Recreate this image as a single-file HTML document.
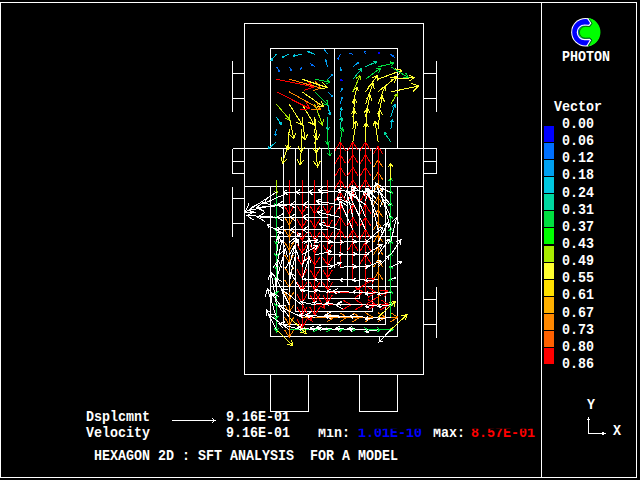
<!DOCTYPE html>
<html lang="en"><head><meta charset="utf-8"><title>PHOTON - HEXAGON 2D : SFT ANALYSIS FOR A MODEL</title>
<style>
html,body{margin:0;padding:0;background:#000;width:640px;height:480px;overflow:hidden}
svg{display:block;position:absolute;left:0;top:0}
text{font-family:"Liberation Mono",monospace;font-weight:bold;font-size:13.33px;white-space:pre}
#vec path{fill:none;stroke-width:1;stroke-linecap:butt;shape-rendering:crispEdges}
</style></head><body>
<svg width="640" height="480" viewBox="0 0 640 480">
<defs><clipPath id="cl"><rect x="300" y="428.7" width="240" height="14"/></clipPath></defs>
<rect width="640" height="480" fill="#000"/>
<path id="geom" d="M0.5 2.5H636.5V477.5H0.5Z M541.5 2.5L541.5 477.5 M244.5 23.5H423.5V374.5H244.5Z M270.5 48.5H397.5V148.5H270.5Z M334.5 48.5L334.5 267.5 M232.5 148.5L436.5 148.5 M244.5 186.5L423.5 186.5 M270.5 186.5H397.5V336.5H270.5Z M270.5 236.5L397.5 236.5 M270.5 286.5L397.5 286.5 M283.5 148.5V324.5H385.5V148.5 M295.5 148.5V311.5H372.5V148.5 M308.5 148.5V298.5H359.5V148.5 M321.5 148.5V286.5H347.5V148.5 M270.5 374.5V411.5H308.5V374.5 M359.5 374.5V411.5H397.5V374.5 M232.5 60.5L232.5 111.5 M232.5 73.5L244.5 73.5 M232.5 98.5L244.5 98.5 M436.5 60.5L436.5 111.5 M423.5 73.5L436.5 73.5 M423.5 98.5L436.5 98.5 M232.5 148.5L232.5 173.5 M232.5 161.5L244.5 161.5 M232.5 173.5L244.5 173.5 M436.5 148.5L436.5 173.5 M423.5 161.5L436.5 161.5 M423.5 173.5L436.5 173.5 M232.5 186.5L232.5 236.5 M232.5 198.5L244.5 198.5 M232.5 223.5L244.5 223.5 M436.5 286.5L436.5 337.5 M423.5 299.5L436.5 299.5 M423.5 324.5L436.5 324.5" fill="none" stroke="#fff" stroke-width="1" shape-rendering="crispEdges"/>
<g id="vec">
<path d="M276.4 329.8L293.0 345.6M287.0 344.3L293.0 345.6L291.4 339.6" stroke="#ffff30"/>
<path d="M289.2 329.8L304.2 329.8M300.8 331.9L304.2 329.8L300.8 327.6" stroke="#00e040"/>
<path d="M302.0 329.8L317.0 329.8M313.6 331.9L317.0 329.8L313.6 327.6" stroke="#00e040"/>
<path d="M314.8 329.8L329.8 329.8M326.4 331.9L329.8 329.8L326.4 327.6" stroke="#00e040"/>
<path d="M327.6 329.8L342.6 329.8M339.2 331.9L342.6 329.8L339.2 327.6" stroke="#00e040"/>
<path d="M340.3 329.8L355.3 329.8M351.9 331.9L355.3 329.8L351.9 327.6" stroke="#00e040"/>
<path d="M352.9 329.8L367.9 329.8M364.4 331.9L367.9 329.8L364.4 327.6" stroke="#00e040"/>
<path d="M365.5 329.8L380.5 329.8M377.1 331.9L380.5 329.8L377.1 327.6" stroke="#00e040"/>
<path d="M378.1 329.8L393.1 329.8M389.7 331.9L393.1 329.8L389.7 327.6" stroke="#00e040"/>
<path d="M390.7 329.8L407.0 314.7M405.4 320.4L407.0 314.7L401.1 315.9" stroke="#ffff30"/>
<path d="M276.4 317.2L276.4 331.8M274.4 328.4L276.4 331.8L278.4 328.4" stroke="#00e040"/>
<path d="M289.2 317.2L306.2 333.4M300.1 332.1L306.2 333.4L304.6 327.3" stroke="#ffff30"/>
<path d="M302.0 317.2L334.5 317.2M327.0 321.8L334.5 317.2L327.0 312.7" stroke="#ff8800"/>
<path d="M314.8 317.2L347.3 317.2M339.8 321.8L347.3 317.2L339.8 312.7" stroke="#ff8800"/>
<path d="M327.6 317.2L360.1 317.2M352.6 321.8L360.1 317.2L352.6 312.7" stroke="#ff8800"/>
<path d="M340.3 317.2L372.8 317.2M365.3 321.8L372.8 317.2L365.3 312.7" stroke="#ff8800"/>
<path d="M352.9 317.2L385.4 317.2M377.9 321.8L385.4 317.2L377.9 312.7" stroke="#ff8800"/>
<path d="M365.5 317.2L398.0 317.2M390.5 321.8L398.0 317.2L390.5 312.7" stroke="#ff8800"/>
<path d="M378.1 317.2L395.6 301.2M393.8 307.4L395.6 301.2L389.3 302.5" stroke="#ffff30"/>
<path d="M390.7 317.2L390.7 302.8M392.7 306.1L390.7 302.8L388.7 306.1" stroke="#00e040"/>
<path d="M276.4 304.8L276.4 319.2M274.4 315.9L276.4 319.2L278.4 315.9" stroke="#00e040"/>
<path d="M289.2 304.8L289.2 337.2M284.6 329.8L289.2 337.2L293.8 329.8" stroke="#ff8800"/>
<path d="M302.0 304.8L312.0 320.8M307.5 318.5L312.0 320.8L311.9 315.7" stroke="#ff0000"/>
<path d="M314.8 304.8L350.8 304.8M342.5 309.8L350.8 304.8L342.5 299.7" stroke="#ff0000"/>
<path d="M327.6 304.8L363.6 304.8M355.3 309.8L363.6 304.8L355.3 299.7" stroke="#ff0000"/>
<path d="M340.3 304.8L376.3 304.8M368.0 309.8L376.3 304.8L368.0 299.7" stroke="#ff0000"/>
<path d="M352.9 304.8L388.9 304.8M380.6 309.8L388.9 304.8L380.6 299.7" stroke="#ff0000"/>
<path d="M365.5 304.8L387.5 290.8M384.4 297.1L387.5 290.8L380.5 290.9" stroke="#ff0000"/>
<path d="M378.1 304.8L378.1 272.2M382.7 279.7L378.1 272.2L373.6 279.7" stroke="#ff8800"/>
<path d="M390.7 304.8L390.7 290.2M392.7 293.6L390.7 290.2L388.7 293.6" stroke="#00e040"/>
<path d="M276.4 292.2L276.4 306.8M274.4 303.4L276.4 306.8L278.4 303.4" stroke="#00e040"/>
<path d="M289.2 292.2L289.2 324.8M284.6 317.3L289.2 324.8L293.8 317.3" stroke="#ff8800"/>
<path d="M302.0 292.2L302.0 327.8M297.0 319.6L302.0 327.8L307.0 319.6" stroke="#ff0000"/>
<path d="M314.8 292.2L324.8 308.2M320.3 306.0L324.8 308.2L324.7 303.2" stroke="#ff0000"/>
<path d="M327.6 292.2L363.6 292.2M355.3 297.3L363.6 292.2L355.3 287.2" stroke="#ff0000"/>
<path d="M340.3 292.2L376.3 292.2M368.0 297.3L376.3 292.2L368.0 287.2" stroke="#ff0000"/>
<path d="M352.9 292.2L374.9 278.2M371.8 284.6L374.9 278.2L367.9 278.4" stroke="#ff0000"/>
<path d="M365.5 292.2L365.5 254.8M370.8 263.4L365.5 254.8L360.2 263.4" stroke="#ff0000"/>
<path d="M378.1 292.2L378.1 259.8M382.7 267.2L378.1 259.8L373.6 267.2" stroke="#ff8800"/>
<path d="M390.7 292.2L390.7 277.8M392.7 281.1L390.7 277.8L388.7 281.1" stroke="#00e040"/>
<path d="M276.4 279.8L276.4 294.2M274.4 290.9L276.4 294.2L278.4 290.9" stroke="#00e040"/>
<path d="M289.2 279.8L289.2 312.2M284.6 304.8L289.2 312.2L293.8 304.8" stroke="#ff8800"/>
<path d="M302.0 279.8L302.0 315.2M297.0 307.1L302.0 315.2L307.0 307.1" stroke="#ff0000"/>
<path d="M314.8 279.8L314.8 315.2M309.8 307.1L314.8 315.2L319.8 307.1" stroke="#ff0000"/>
<path d="M352.9 279.8L352.9 242.2M358.1 250.9L352.9 242.2L347.6 250.9" stroke="#ff0000"/>
<path d="M365.5 279.8L365.5 242.2M370.8 250.9L365.5 242.2L360.2 250.9" stroke="#ff0000"/>
<path d="M378.1 279.8L378.1 247.2M382.7 254.7L378.1 247.2L373.6 254.7" stroke="#ff8800"/>
<path d="M390.7 279.8L390.7 265.2M392.7 268.6L390.7 265.2L388.7 268.6" stroke="#00e040"/>
<path d="M276.4 267.2L276.4 281.8M274.4 278.4L276.4 281.8L278.4 278.4" stroke="#00e040"/>
<path d="M289.2 267.2L289.2 299.8M284.6 292.3L289.2 299.8L293.8 292.3" stroke="#ff8800"/>
<path d="M302.0 267.2L302.0 302.8M297.0 294.6L302.0 302.8L307.0 294.6" stroke="#ff0000"/>
<path d="M314.8 267.2L314.8 302.8M309.8 294.6L314.8 302.8L319.8 294.6" stroke="#ff0000"/>
<path d="M327.6 267.2L327.6 302.8M322.6 294.6L327.6 302.8L332.6 294.6" stroke="#ff0000"/>
<path d="M340.3 267.2L340.3 229.8M345.6 238.4L340.3 229.8L335.1 238.4" stroke="#ff0000"/>
<path d="M352.9 267.2L352.9 229.8M358.1 238.4L352.9 229.8L347.6 238.4" stroke="#ff0000"/>
<path d="M365.5 267.2L365.5 229.8M370.8 238.4L365.5 229.8L360.2 238.4" stroke="#ff0000"/>
<path d="M378.1 267.2L378.1 234.8M382.7 242.2L378.1 234.8L373.6 242.2" stroke="#ff8800"/>
<path d="M390.7 267.2L390.7 252.8M392.7 256.1L390.7 252.8L388.7 256.1" stroke="#00e040"/>
<path d="M276.4 254.8L276.4 269.2M274.4 265.9L276.4 269.2L278.4 265.9" stroke="#00e040"/>
<path d="M289.2 254.8L289.2 287.2M284.6 279.8L289.2 287.2L293.8 279.8" stroke="#ff8800"/>
<path d="M302.0 254.8L302.0 290.2M297.0 282.1L302.0 290.2L307.0 282.1" stroke="#ff0000"/>
<path d="M314.8 254.8L314.8 290.2M309.8 282.1L314.8 290.2L319.8 282.1" stroke="#ff0000"/>
<path d="M327.6 254.8L327.6 290.2M322.6 282.1L327.6 290.2L332.6 282.1" stroke="#ff0000"/>
<path d="M340.3 254.8L340.3 217.2M345.6 225.9L340.3 217.2L335.1 225.9" stroke="#ff0000"/>
<path d="M352.9 254.8L352.9 217.2M358.1 225.9L352.9 217.2L347.6 225.9" stroke="#ff0000"/>
<path d="M365.5 254.8L365.5 217.2M370.8 225.9L365.5 217.2L360.2 225.9" stroke="#ff0000"/>
<path d="M378.1 254.8L378.1 222.2M382.7 229.7L378.1 222.2L373.6 229.7" stroke="#ff8800"/>
<path d="M390.7 254.8L390.7 240.2M392.7 243.6L390.7 240.2L388.7 243.6" stroke="#00e040"/>
<path d="M276.4 242.2L276.4 256.8M274.4 253.4L276.4 256.8L278.4 253.4" stroke="#00e040"/>
<path d="M289.2 242.2L289.2 274.8M284.6 267.3L289.2 274.8L293.8 267.3" stroke="#ff8800"/>
<path d="M302.0 242.2L302.0 277.8M297.0 269.6L302.0 277.8L307.0 269.6" stroke="#ff0000"/>
<path d="M314.8 242.2L314.8 277.8M309.8 269.6L314.8 277.8L319.8 269.6" stroke="#ff0000"/>
<path d="M327.6 242.2L327.6 277.8M322.6 269.6L327.6 277.8L332.6 269.6" stroke="#ff0000"/>
<path d="M340.3 242.2L340.3 204.8M345.6 213.4L340.3 204.8L335.1 213.4" stroke="#ff0000"/>
<path d="M352.9 242.2L352.9 204.8M358.1 213.4L352.9 204.8L347.6 213.4" stroke="#ff0000"/>
<path d="M365.5 242.2L365.5 204.8M370.8 213.4L365.5 204.8L360.2 213.4" stroke="#ff0000"/>
<path d="M378.1 242.2L378.1 209.8M382.7 217.2L378.1 209.8L373.6 217.2" stroke="#ff8800"/>
<path d="M390.7 242.2L390.7 227.8M392.7 231.1L390.7 227.8L388.7 231.1" stroke="#00e040"/>
<path d="M276.4 229.8L276.4 244.2M274.4 240.9L276.4 244.2L278.4 240.9" stroke="#00e040"/>
<path d="M289.2 229.8L289.2 262.2M284.6 254.8L289.2 262.2L293.8 254.8" stroke="#ff8800"/>
<path d="M302.0 229.8L302.0 265.2M297.0 257.1L302.0 265.2L307.0 257.1" stroke="#ff0000"/>
<path d="M314.8 229.8L314.8 265.2M309.8 257.1L314.8 265.2L319.8 257.1" stroke="#ff0000"/>
<path d="M327.6 229.8L327.6 265.2M322.6 257.1L327.6 265.2L332.6 257.1" stroke="#ff0000"/>
<path d="M340.3 229.8L340.3 192.2M345.6 200.9L340.3 192.2L335.1 200.9" stroke="#ff0000"/>
<path d="M352.9 229.8L352.9 192.2M358.1 200.9L352.9 192.2L347.6 200.9" stroke="#ff0000"/>
<path d="M365.5 229.8L365.5 192.2M370.8 200.9L365.5 192.2L360.2 200.9" stroke="#ff0000"/>
<path d="M378.1 229.8L378.1 197.2M382.7 204.7L378.1 197.2L373.6 204.7" stroke="#ff8800"/>
<path d="M390.7 229.8L390.7 215.2M392.7 218.6L390.7 215.2L388.7 218.6" stroke="#00e040"/>
<path d="M276.4 217.2L276.4 231.8M274.4 228.4L276.4 231.8L278.4 228.4" stroke="#00e040"/>
<path d="M289.2 217.2L289.2 249.8M284.6 242.3L289.2 249.8L293.8 242.3" stroke="#ff8800"/>
<path d="M302.0 217.2L302.0 252.8M297.0 244.6L302.0 252.8L307.0 244.6" stroke="#ff0000"/>
<path d="M314.8 217.2L314.8 252.8M309.8 244.6L314.8 252.8L319.8 244.6" stroke="#ff0000"/>
<path d="M327.6 217.2L327.6 252.8M322.6 244.6L327.6 252.8L332.6 244.6" stroke="#ff0000"/>
<path d="M340.3 217.2L340.3 179.8M345.6 188.4L340.3 179.8L335.1 188.4" stroke="#ff0000"/>
<path d="M352.9 217.2L352.9 179.8M358.1 188.4L352.9 179.8L347.6 188.4" stroke="#ff0000"/>
<path d="M365.5 217.2L365.5 179.8M370.8 188.4L365.5 179.8L360.2 188.4" stroke="#ff0000"/>
<path d="M378.1 217.2L378.1 184.8M382.7 192.2L378.1 184.8L373.6 192.2" stroke="#ff8800"/>
<path d="M390.7 217.2L390.7 202.8M392.7 206.1L390.7 202.8L388.7 206.1" stroke="#00e040"/>
<path d="M276.4 204.8L276.4 219.2M274.4 215.9L276.4 219.2L278.4 215.9" stroke="#00e040"/>
<path d="M289.2 204.8L289.2 237.2M284.6 229.8L289.2 237.2L293.8 229.8" stroke="#ff8800"/>
<path d="M302.0 204.8L302.0 240.2M297.0 232.1L302.0 240.2L307.0 232.1" stroke="#ff0000"/>
<path d="M314.8 204.8L314.8 240.2M309.8 232.1L314.8 240.2L319.8 232.1" stroke="#ff0000"/>
<path d="M327.6 204.8L327.6 240.2M322.6 232.1L327.6 240.2L332.6 232.1" stroke="#ff0000"/>
<path d="M340.3 204.8L340.3 167.2M345.6 175.9L340.3 167.2L335.1 175.9" stroke="#ff0000"/>
<path d="M352.9 204.8L352.9 167.2M358.1 175.9L352.9 167.2L347.6 175.9" stroke="#ff0000"/>
<path d="M365.5 204.8L365.5 167.2M370.8 175.9L365.5 167.2L360.2 175.9" stroke="#ff0000"/>
<path d="M378.1 204.8L378.1 172.2M382.7 179.7L378.1 172.2L373.6 179.7" stroke="#ff8800"/>
<path d="M390.7 204.8L390.7 190.2M392.7 193.6L390.7 190.2L388.7 193.6" stroke="#00e040"/>
<path d="M276.4 192.2L276.4 206.8M274.4 203.4L276.4 206.8L278.4 203.4" stroke="#00e040"/>
<path d="M289.2 192.2L289.2 224.8M284.6 217.3L289.2 224.8L293.8 217.3" stroke="#ff8800"/>
<path d="M302.0 192.2L302.0 227.8M297.0 219.6L302.0 227.8L307.0 219.6" stroke="#ff0000"/>
<path d="M314.8 192.2L314.8 227.8M309.8 219.6L314.8 227.8L319.8 219.6" stroke="#ff0000"/>
<path d="M327.6 192.2L327.6 227.8M322.6 219.6L327.6 227.8L332.6 219.6" stroke="#ff0000"/>
<path d="M340.3 192.2L340.3 154.8M345.6 163.4L340.3 154.8L335.1 163.4" stroke="#ff0000"/>
<path d="M352.9 192.2L352.9 154.8M358.1 163.4L352.9 154.8L347.6 163.4" stroke="#ff0000"/>
<path d="M365.5 192.2L365.5 154.8M370.8 163.4L365.5 154.8L360.2 163.4" stroke="#ff0000"/>
<path d="M378.1 192.2L378.1 159.8M382.7 167.2L378.1 159.8L373.6 167.2" stroke="#ff8800"/>
<path d="M390.7 192.2L390.7 177.8M392.7 181.1L390.7 177.8L388.7 181.1" stroke="#00e040"/>
<path d="M276.4 179.7L276.4 194.0M274.4 190.7L276.4 194.0L278.4 190.7" stroke="#a8ec00"/>
<path d="M289.2 179.7L289.2 213.7M284.4 205.9L289.2 213.7L294.0 205.9" stroke="#ff0000"/>
<path d="M302.0 179.7L302.0 213.7M297.2 205.9L302.0 213.7L306.8 205.9" stroke="#ff0000"/>
<path d="M314.8 179.7L314.8 213.7M310.0 205.9L314.8 213.7L319.6 205.9" stroke="#ff0000"/>
<path d="M327.6 179.7L327.6 213.7M322.8 205.9L327.6 213.7L332.4 205.9" stroke="#ff0000"/>
<path d="M340.3 179.7L340.3 141.9M345.6 150.6L340.3 141.9L335.0 150.6" stroke="#ff0000"/>
<path d="M352.9 179.7L352.9 141.9M358.2 150.6L352.9 141.9L347.6 150.6" stroke="#ff0000"/>
<path d="M365.5 179.7L365.5 141.9M370.8 150.6L365.5 141.9L360.2 150.6" stroke="#ff0000"/>
<path d="M378.1 179.7L378.1 146.3M382.8 154.0L378.1 146.3L373.4 154.0" stroke="#ff0000"/>
<path d="M390.7 179.7L390.7 163.5M393.0 167.2L390.7 163.5L388.4 167.2" stroke="#ffff30"/>
<path d="M276.4 141.8L268.1 148.8M269.0 146.0L268.1 148.8L271.0 148.3" stroke="#00c8e0"/>
<path d="M289.2 141.8L282.5 163.1M281.1 157.3L282.5 163.1L287.0 159.1" stroke="#ffff30"/>
<path d="M302.0 141.8L300.0 165.0M297.2 159.4L300.0 165.0L303.7 159.9" stroke="#ffff30"/>
<path d="M314.8 141.8L317.5 166.9M313.4 161.5L317.5 166.9L320.4 160.7" stroke="#ffff30"/>
<path d="M327.6 141.8L330.0 156.2M327.4 153.3L330.0 156.2L331.5 152.6" stroke="#00e040"/>
<path d="M340.3 141.8L342.5 128.0M343.9 131.5L342.5 128.0L340.1 130.9" stroke="#00e040"/>
<path d="M352.9 141.8L356.2 121.2M358.3 126.4L356.2 121.2L352.6 125.5" stroke="#ffff30"/>
<path d="M365.5 141.8L366.2 122.5M368.8 127.0L366.2 122.5L363.4 126.8" stroke="#ffff30"/>
<path d="M378.1 141.8L375.0 121.2M378.6 125.5L375.0 121.2L372.8 126.4" stroke="#ffff30"/>
<path d="M390.7 141.8L384.4 132.5M387.1 133.7L384.4 132.5L384.6 135.5" stroke="#00d8a0"/>
<path d="M276.4 129.2L275.2 135.6M274.6 134.0L275.2 135.6L276.4 134.3" stroke="#00a0f0"/>
<path d="M289.2 129.2L288.1 150.0M285.4 145.1L288.1 150.0L291.3 145.4" stroke="#ffff30"/>
<path d="M302.0 129.2L301.2 151.9M298.3 146.6L301.2 151.9L304.6 146.8" stroke="#ffff30"/>
<path d="M314.8 129.2L316.2 153.0M312.6 147.7L316.2 153.0L319.2 147.3" stroke="#ffff30"/>
<path d="M327.6 129.2L327.5 144.4M325.4 140.9L327.5 144.4L329.6 140.9" stroke="#00e040"/>
<path d="M340.3 129.2L341.5 117.5M342.9 120.4L341.5 117.5L339.6 120.0" stroke="#00d8a0"/>
<path d="M352.9 129.2L354.4 109.4M356.8 114.2L354.4 109.4L351.3 113.8" stroke="#ffff30"/>
<path d="M365.5 129.2L367.5 108.0M370.0 113.2L367.5 108.0L364.1 112.6" stroke="#ffff30"/>
<path d="M378.1 129.2L380.0 110.0M382.3 114.7L380.0 110.0L376.9 114.2" stroke="#ffff30"/>
<path d="M390.7 129.2L392.5 120.0M393.4 122.4L392.5 120.0L390.8 121.9" stroke="#00c8e0"/>
<path d="M276.4 116.8L281.2 124.4M279.1 123.3L281.2 124.4L281.2 122.0" stroke="#00c8e0"/>
<path d="M289.2 116.8L293.8 138.8M289.6 134.3L293.8 138.8L295.8 133.1" stroke="#ffff30"/>
<path d="M302.0 116.8L305.0 140.0M301.1 135.1L305.0 140.0L307.6 134.2" stroke="#ffff30"/>
<path d="M314.8 116.8L316.9 140.0M313.2 134.9L316.9 140.0L319.7 134.4" stroke="#ffff30"/>
<path d="M327.6 116.8L328.1 130.0M326.1 127.0L328.1 130.0L329.8 126.9" stroke="#00d8a0"/>
<path d="M340.3 116.8L341.5 107.8M342.5 110.0L341.5 107.8L340.0 109.7" stroke="#00c8e0"/>
<path d="M352.9 116.8L355.0 98.8M357.0 103.2L355.0 98.8L352.0 102.6" stroke="#ffff30"/>
<path d="M365.5 116.8L370.0 95.0M372.0 100.6L370.0 95.0L365.9 99.4" stroke="#ffff30"/>
<path d="M378.1 116.8L382.5 96.2M384.4 101.6L382.5 96.2L378.6 100.3" stroke="#ffff30"/>
<path d="M390.7 116.8L395.0 104.4M395.7 107.8L395.0 104.4L392.3 106.6" stroke="#00c8e0"/>
<path d="M276.4 104.2L290.0 120.0M284.7 118.3L290.0 120.0L289.1 114.5" stroke="#a8ec00"/>
<path d="M289.2 104.2L302.5 125.0M296.5 122.1L302.5 125.0L302.3 118.4" stroke="#ffff30"/>
<path d="M302.0 104.2L314.4 125.0M308.6 122.0L314.4 125.0L314.5 118.5" stroke="#ffff30"/>
<path d="M314.8 104.2L322.5 125.0M317.8 121.3L322.5 125.0L323.6 119.1" stroke="#a8ec00"/>
<path d="M327.6 104.2L330.0 115.0M327.9 112.9L330.0 115.0L331.0 112.2" stroke="#00c8e0"/>
<path d="M340.3 104.2L342.0 96.9M342.6 98.8L342.0 96.9L340.6 98.4" stroke="#00a0f0"/>
<path d="M352.9 104.2L356.9 86.9M358.4 91.5L356.9 86.9L353.6 90.3" stroke="#ffff30"/>
<path d="M365.5 104.2L373.1 83.1M374.3 89.0L373.1 83.1L368.4 86.9" stroke="#ffff30"/>
<path d="M378.1 104.2L385.0 86.2M385.9 91.4L385.0 86.2L380.9 89.4" stroke="#ffff30"/>
<path d="M390.7 104.2L397.0 94.0M397.0 97.2L397.0 94.0L394.1 95.5" stroke="#a8ec00"/>
<path d="M276.4 91.8L310.0 108.8M299.9 109.5L310.0 108.8L304.7 100.1" stroke="#ff0000"/>
<path d="M289.2 91.8L320.6 109.4M310.9 109.7L320.6 109.4L315.8 100.9" stroke="#ff8800"/>
<path d="M302.0 91.8L323.8 106.9M316.6 106.5L323.8 106.9L320.9 100.4" stroke="#ffff30"/>
<path d="M314.8 91.8L328.1 105.0M323.2 103.8L328.1 105.0L326.9 100.1" stroke="#00e040"/>
<path d="M327.6 91.8L332.5 96.5M330.7 96.1L332.5 96.5L332.0 94.7" stroke="#00a0f0"/>
<path d="M340.3 91.8L342.5 88.5M342.4 90.0L342.5 88.5L341.1 89.1" stroke="#00a0f0"/>
<path d="M352.9 91.8L360.0 75.6M360.6 80.3L360.0 75.6L356.1 78.3" stroke="#a8ec00"/>
<path d="M365.5 91.8L377.5 75.6M377.0 81.0L377.5 75.6L372.5 77.6" stroke="#ffff30"/>
<path d="M378.1 91.8L396.7 76.7M394.5 82.8L396.7 76.7L390.3 77.6" stroke="#ffff30"/>
<path d="M390.7 91.8L418.8 86.1M413.1 91.3L418.8 86.1L411.5 83.5" stroke="#ffff30"/>
<path d="M276.4 79.2L313.8 86.9M304.1 90.4L313.8 86.9L306.2 79.9" stroke="#ff0000"/>
<path d="M289.2 79.2L321.2 88.1M312.6 90.6L321.2 88.1L315.1 81.6" stroke="#ff8800"/>
<path d="M302.0 79.2L326.9 87.5M320.0 89.1L326.9 87.5L322.3 82.1" stroke="#ffff30"/>
<path d="M314.8 79.2L330.0 82.1M326.1 83.6L330.0 82.1L326.9 79.3" stroke="#00e040"/>
<path d="M327.6 79.2L332.5 74.4M332.1 76.2L332.5 74.4L330.7 74.8" stroke="#00a0f0"/>
<path d="M340.3 79.2L342.0 80.5M340.5 80.4L342.0 80.5L341.4 79.1" stroke="#0000ff"/>
<path d="M352.9 79.2L361.9 68.5M361.3 72.2L361.9 68.5L358.3 69.7" stroke="#00d8a0"/>
<path d="M365.5 79.2L380.6 68.1M378.7 72.8L380.6 68.1L375.6 68.6" stroke="#00e040"/>
<path d="M378.1 79.2L401.9 70.2M397.7 75.6L401.9 70.2L395.2 68.9" stroke="#ffff30"/>
<path d="M390.7 79.2L414.0 77.7M408.9 81.3L414.0 77.7L408.4 74.8" stroke="#ffff30"/>
<path d="M276.4 66.8L279.8 71.5M278.3 70.9L279.8 71.5L279.6 69.9" stroke="#0070ff"/>
<path d="M289.2 66.8L291.5 70.6M290.2 69.9L291.5 70.6L291.5 69.1" stroke="#0070ff"/>
<path d="M302.0 66.8L300.6 69.0M300.6 67.5L300.6 69.0L301.9 68.3" stroke="#0070ff"/>
<path d="M314.8 66.8L311.2 64.0M312.8 64.2L311.2 64.0L311.8 65.4" stroke="#0070ff"/>
<path d="M327.6 66.8L325.6 60.0M327.0 61.3L325.6 60.0L325.1 61.8" stroke="#00a0f0"/>
<path d="M340.3 66.8L341.0 70.6M340.0 69.5L341.0 70.6L341.5 69.2" stroke="#00a0f0"/>
<path d="M352.9 66.8L358.8 62.2M358.0 64.1L358.8 62.2L356.8 62.5" stroke="#00a0f0"/>
<path d="M365.5 66.8L376.9 61.5M375.0 64.3L376.9 61.5L373.5 61.1" stroke="#00d8a0"/>
<path d="M378.1 66.8L393.8 63.1M390.7 66.1L393.8 63.1L389.6 61.7" stroke="#00e040"/>
<path d="M390.7 66.8L408.1 77.5M402.6 77.5L408.1 77.5L405.6 72.6" stroke="#00e040"/>
<path d="M276.4 54.2L271.0 60.6M271.4 58.4L271.0 60.6L273.1 59.9" stroke="#00c8e0"/>
<path d="M289.2 54.2L282.2 57.1M283.4 55.5L282.2 57.1L284.2 57.4" stroke="#00c8e0"/>
<path d="M302.0 54.2L293.1 56.0M294.9 54.4L293.1 56.0L295.4 56.8" stroke="#00c8e0"/>
<path d="M314.8 54.2L307.5 51.5M309.6 51.1L307.5 51.5L308.8 53.2" stroke="#00c8e0"/>
<path d="M327.6 54.2L324.8 49.8M326.1 50.4L324.8 49.8L324.8 51.3" stroke="#00a0f0"/>
<path d="M340.3 54.2L338.1 59.4M337.9 57.9L338.1 59.4L339.3 58.5" stroke="#0070ff"/>
<path d="M352.9 54.2L349.4 53.5M350.8 53.0L349.4 53.5L350.5 54.5" stroke="#0070ff"/>
<path d="M365.5 54.2L364.4 51.2M365.6 52.2L364.4 51.2L364.1 52.7" stroke="#0070ff"/>
<path d="M378.1 54.2L379.4 52.2M379.3 53.8L379.4 52.2L378.0 52.9" stroke="#0000ff"/>
<path d="M390.7 54.2L393.8 56.9M392.3 56.6L393.8 56.9L393.3 55.5" stroke="#0070ff"/>
<path d="M276.4 329.8L266.6 310.1M271.6 313.2L266.6 310.1L266.1 316.0" stroke="#ffffff"/>
<path d="M289.2 329.8L268.4 314.1M275.4 314.8L268.4 314.1L271.0 320.6" stroke="#ffffff"/>
<path d="M302.0 329.8L278.8 323.8M284.9 321.9L278.8 323.8L283.3 328.4" stroke="#ffffff"/>
<path d="M314.8 329.8L297.4 327.5M301.8 325.6L297.4 327.5L301.1 330.4" stroke="#ffffff"/>
<path d="M327.6 329.8L310.2 327.8M314.5 325.8L310.2 327.8L313.9 330.6" stroke="#ffffff"/>
<path d="M340.3 329.8L316.4 327.4M322.2 324.6L316.4 327.4L321.6 331.3" stroke="#ffffff"/>
<path d="M352.9 329.8L335.5 328.3M339.7 326.2L335.5 328.3L339.3 331.0" stroke="#ffffff"/>
<path d="M365.5 329.8L348.0 328.5M352.2 326.4L348.0 328.5L351.9 331.3" stroke="#ffffff"/>
<path d="M378.1 329.8L365.2 331.6M367.9 329.3L365.2 331.6L368.4 332.9" stroke="#ffffff"/>
<path d="M390.7 329.8L379.0 342.0M380.0 337.5L379.0 342.0L383.4 340.8" stroke="#ffffff"/>
<path d="M276.4 317.2L267.4 288.6M273.4 294.0L267.4 288.6L265.4 296.5" stroke="#ffffff"/>
<path d="M289.2 317.2L271.2 293.2M278.7 296.2L271.2 293.2L272.0 301.3" stroke="#ffffff"/>
<path d="M302.0 317.2L278.5 306.0M285.5 305.3L278.5 306.0L282.4 311.9" stroke="#ffffff"/>
<path d="M314.8 317.2L298.9 315.2M302.9 313.4L298.9 315.2L302.3 317.9" stroke="#ffffff"/>
<path d="M327.6 317.2L305.7 314.7M311.1 312.3L305.7 314.7L310.4 318.4" stroke="#ffffff"/>
<path d="M340.3 317.2L324.4 315.7M328.3 313.8L324.4 315.7L327.8 318.3" stroke="#ffffff"/>
<path d="M352.9 317.2L325.0 314.9M331.7 311.5L325.0 314.9L331.1 319.3" stroke="#ffffff"/>
<path d="M365.5 317.2L349.5 316.1M353.4 314.2L349.5 316.1L353.1 318.6" stroke="#ffffff"/>
<path d="M378.1 317.2L365.2 319.1M367.9 316.8L365.2 319.1L368.4 320.4" stroke="#ffffff"/>
<path d="M390.7 317.2L377.8 319.1M380.5 316.8L377.8 319.1L381.0 320.4" stroke="#ffffff"/>
<path d="M276.4 304.8L271.1 272.2M276.9 278.9L271.1 272.2L267.8 280.4" stroke="#ffffff"/>
<path d="M289.2 304.8L275.8 277.9M282.6 282.2L275.8 277.9L275.1 286.0" stroke="#ffffff"/>
<path d="M302.0 304.8L281.2 289.1M288.2 289.8L281.2 289.1L283.8 295.6" stroke="#ffffff"/>
<path d="M314.8 304.8L300.6 301.9M304.2 300.6L300.6 301.9L303.5 304.6" stroke="#ffffff"/>
<path d="M327.6 304.8L313.3 302.6M316.9 301.1L313.3 302.6L316.3 305.1" stroke="#ffffff"/>
<path d="M340.3 304.8L325.9 303.3M329.4 301.6L325.9 303.3L329.0 305.7" stroke="#ffffff"/>
<path d="M352.9 304.8L338.4 304.0M341.9 302.2L338.4 304.0L341.6 306.2" stroke="#ffffff"/>
<path d="M365.5 304.8L335.5 304.8M342.4 300.6L335.5 304.8L342.4 308.9" stroke="#ffffff"/>
<path d="M378.1 304.8L365.2 306.6M367.9 304.3L365.2 306.6L368.4 307.9" stroke="#ffffff"/>
<path d="M390.7 304.8L377.8 306.6M380.5 304.3L377.8 306.6L381.0 307.9" stroke="#ffffff"/>
<path d="M276.4 292.2L278.0 260.3M282.1 267.9L278.0 260.3L273.2 267.4" stroke="#ffffff"/>
<path d="M289.2 292.2L289.2 262.2M293.4 269.1L289.2 262.2L285.0 269.1" stroke="#ffffff"/>
<path d="M302.0 292.2L290.9 273.2M296.1 276.1L290.9 273.2L290.8 279.2" stroke="#ffffff"/>
<path d="M314.8 292.2L302.1 289.7M305.3 288.5L302.1 289.7L304.6 292.1" stroke="#ffffff"/>
<path d="M327.6 292.2L314.7 290.3M318.0 289.0L314.7 290.3L317.4 292.6" stroke="#ffffff"/>
<path d="M340.3 292.2L327.4 291.0M330.5 289.4L327.4 291.0L330.2 293.1" stroke="#ffffff"/>
<path d="M352.9 292.2L332.9 291.3M337.7 288.7L332.9 291.3L337.4 294.3" stroke="#ffffff"/>
<path d="M365.5 292.2L352.5 292.2M355.5 290.4L352.5 292.2L355.5 294.1" stroke="#ffffff"/>
<path d="M378.1 292.2L365.2 294.1M367.9 291.8L365.2 294.1L368.4 295.4" stroke="#ffffff"/>
<path d="M390.7 292.2L377.8 294.1M380.5 291.8L377.8 294.1L381.0 295.4" stroke="#ffffff"/>
<path d="M276.4 279.8L285.4 249.0M287.6 257.3L285.4 249.0L279.0 254.8" stroke="#ffffff"/>
<path d="M289.2 279.8L296.7 250.7M299.0 258.4L296.7 250.7L290.9 256.3" stroke="#ffffff"/>
<path d="M302.0 279.8L309.2 256.9M310.8 263.1L309.2 256.9L304.4 261.1" stroke="#ffffff"/>
<path d="M314.8 279.8L303.8 279.3M306.4 277.9L303.8 279.3L306.3 281.0" stroke="#ffffff"/>
<path d="M327.6 279.8L314.6 279.5M317.6 277.7L314.6 279.5L317.6 281.4" stroke="#ffffff"/>
<path d="M340.3 279.8L327.3 279.8M330.3 277.9L327.3 279.8L330.3 281.6" stroke="#ffffff"/>
<path d="M352.9 279.8L339.9 280.0M342.9 278.1L339.9 280.0L342.9 281.8" stroke="#ffffff"/>
<path d="M365.5 279.8L352.5 280.3M355.4 278.3L352.5 280.3L355.6 282.0" stroke="#ffffff"/>
<path d="M378.1 279.8L365.1 280.5M368.0 278.5L365.1 280.5L368.2 282.2" stroke="#ffffff"/>
<path d="M390.7 279.8L396.1 277.2M395.2 278.7L396.1 277.2L394.4 277.0" stroke="#ffffff"/>
<path d="M276.4 267.2L282.0 239.8M284.6 246.9L282.0 239.8L276.9 245.3" stroke="#ffffff"/>
<path d="M289.2 267.2L296.7 238.2M299.0 245.9L296.7 238.2L290.9 243.8" stroke="#ffffff"/>
<path d="M302.0 267.2L309.7 238.8M311.9 246.4L309.7 238.8L304.0 244.2" stroke="#ffffff"/>
<path d="M314.8 267.2L332.8 266.7M328.7 269.4L332.8 266.7L328.6 264.3" stroke="#ffffff"/>
<path d="M327.6 267.2L340.9 262.8M338.4 265.7L340.9 262.8L337.2 262.0" stroke="#ffffff"/>
<path d="M340.3 267.2L356.3 266.4M352.7 268.8L356.3 266.4L352.5 264.4" stroke="#ffffff"/>
<path d="M352.9 267.2L368.9 266.4M365.3 268.8L368.9 266.4L365.1 264.4" stroke="#ffffff"/>
<path d="M365.5 267.2L381.3 261.1M378.6 264.7L381.3 261.1L376.8 260.3" stroke="#ffffff"/>
<path d="M378.1 267.2L389.1 255.6M388.2 259.8L389.1 255.6L384.9 256.8" stroke="#ffffff"/>
<path d="M390.7 267.2L401.6 261.6M399.9 264.4L401.6 261.6L398.3 261.4" stroke="#ffffff"/>
<path d="M276.4 254.8L279.1 236.9M280.9 241.4L279.1 236.9L276.0 240.7" stroke="#ffffff"/>
<path d="M289.2 254.8L298.3 239.2M298.4 244.1L298.3 239.2L294.1 241.5" stroke="#ffffff"/>
<path d="M302.0 254.8L317.5 245.6M315.2 249.9L317.5 245.6L312.7 245.6" stroke="#ffffff"/>
<path d="M314.8 254.8L331.5 251.4M328.1 254.5L331.5 251.4L327.2 249.8" stroke="#ffffff"/>
<path d="M327.6 254.8L342.6 254.0M339.2 256.3L342.6 254.0L339.0 252.1" stroke="#ffffff"/>
<path d="M340.3 254.8L356.3 253.9M352.7 256.3L356.3 253.9L352.5 251.9" stroke="#ffffff"/>
<path d="M352.9 254.8L368.9 253.9M365.3 256.3L368.9 253.9L365.1 251.9" stroke="#ffffff"/>
<path d="M365.5 254.8L382.5 244.2M380.0 249.0L382.5 244.2L377.1 244.2" stroke="#ffffff"/>
<path d="M378.1 254.8L389.2 239.3M388.8 244.4L389.2 239.3L384.5 241.3" stroke="#ffffff"/>
<path d="M390.7 254.8L401.0 239.8M400.7 244.6L401.0 239.8L396.5 241.8" stroke="#ffffff"/>
<path d="M276.4 242.2L280.0 230.8M280.8 233.9L280.0 230.8L277.6 232.9" stroke="#ffffff"/>
<path d="M289.2 242.2L300.4 233.8M299.0 237.3L300.4 233.8L296.6 234.2" stroke="#ffffff"/>
<path d="M302.0 242.2L317.8 239.9M314.5 242.6L317.8 239.9L313.9 238.2" stroke="#ffffff"/>
<path d="M314.8 242.2L331.8 241.4M328.0 244.0L331.8 241.4L327.8 239.2" stroke="#ffffff"/>
<path d="M327.6 242.2L343.6 242.2M339.9 244.5L343.6 242.2L339.9 240.0" stroke="#ffffff"/>
<path d="M340.3 242.2L356.3 241.4M352.7 243.8L356.3 241.4L352.5 239.4" stroke="#ffffff"/>
<path d="M352.9 242.2L368.9 241.4M365.3 243.8L368.9 241.4L365.1 239.4" stroke="#ffffff"/>
<path d="M365.5 242.2L382.9 227.3M381.0 233.2L382.9 227.3L376.8 228.3" stroke="#ffffff"/>
<path d="M378.1 242.2L387.9 222.6M388.4 228.5L387.9 222.6L382.9 225.7" stroke="#ffffff"/>
<path d="M390.7 242.2L396.6 217.5M398.7 224.0L396.6 217.5L391.8 222.4" stroke="#ffffff"/>
<path d="M276.4 229.8L267.5 225.0M270.2 224.8L267.5 225.0L268.9 227.3" stroke="#ffffff"/>
<path d="M289.2 229.8L275.0 229.0M278.4 227.2L275.0 229.0L278.2 231.2" stroke="#ffffff"/>
<path d="M302.0 229.8L277.0 229.8M282.8 226.2L277.0 229.8L282.8 233.2" stroke="#ffffff"/>
<path d="M314.8 229.8L289.8 229.8M295.6 226.2L289.8 229.8L295.6 233.2" stroke="#ffffff"/>
<path d="M327.6 229.8L302.6 229.8M308.4 226.2L302.6 229.8L308.4 233.2" stroke="#ffffff"/>
<path d="M340.3 229.8L319.0 224.0M324.7 222.3L319.0 224.0L323.1 228.3" stroke="#ffffff"/>
<path d="M352.9 229.8L340.0 201.0M347.0 205.8L340.0 201.0L338.9 209.4" stroke="#ffffff"/>
<path d="M365.5 229.8L348.0 192.0M357.3 198.2L348.0 192.0L346.7 203.1" stroke="#ffffff"/>
<path d="M378.1 229.8L368.5 191.2M376.1 198.8L368.5 191.2L365.3 201.4" stroke="#ffffff"/>
<path d="M390.7 229.8L382.9 198.8M389.0 204.8L382.9 198.8L380.4 207.0" stroke="#ffffff"/>
<path d="M276.4 217.2L247.0 215.5M254.0 211.8L247.0 215.5L253.5 220.0" stroke="#ffffff"/>
<path d="M289.2 217.2L257.5 217.0M264.8 212.6L257.5 217.0L264.8 221.5" stroke="#ffffff"/>
<path d="M302.0 217.2L277.0 217.2M282.8 213.8L277.0 217.2L282.8 220.8" stroke="#ffffff"/>
<path d="M314.8 217.2L289.8 217.2M295.6 213.8L289.8 217.2L295.6 220.8" stroke="#ffffff"/>
<path d="M327.6 217.2L302.6 217.2M308.4 213.8L302.6 217.2L308.4 220.8" stroke="#ffffff"/>
<path d="M340.3 217.2L317.0 212.0M323.1 209.9L317.0 212.0L321.6 216.5" stroke="#ffffff"/>
<path d="M352.9 217.2L346.6 191.2M351.7 196.3L346.6 191.2L344.4 198.1" stroke="#ffffff"/>
<path d="M365.5 217.2L352.2 185.6M359.7 191.0L352.2 185.6L350.9 194.7" stroke="#ffffff"/>
<path d="M378.1 217.2L366.0 188.0M372.9 193.0L366.0 188.0L364.7 196.4" stroke="#ffffff"/>
<path d="M390.7 217.2L375.4 182.5M383.8 188.4L375.4 182.5L374.1 192.6" stroke="#ffffff"/>
<path d="M276.4 204.8L249.0 210.5M254.5 205.3L249.0 210.5L256.1 213.0" stroke="#ffffff"/>
<path d="M289.2 204.8L256.5 207.5M263.6 202.3L256.5 207.5L264.4 211.4" stroke="#ffffff"/>
<path d="M302.0 204.8L277.0 204.8M282.8 201.2L277.0 204.8L282.8 208.2" stroke="#ffffff"/>
<path d="M314.8 204.8L289.8 204.8M295.6 201.2L289.8 204.8L295.6 208.2" stroke="#ffffff"/>
<path d="M327.6 204.8L302.6 204.8M308.4 201.2L302.6 204.8L308.4 208.2" stroke="#ffffff"/>
<path d="M340.3 204.8L316.0 201.0M322.1 198.5L316.0 201.0L321.1 205.3" stroke="#ffffff"/>
<path d="M352.9 204.8L337.0 198.0M341.6 197.3L337.0 198.0L339.7 201.8" stroke="#ffffff"/>
<path d="M365.5 204.8L350.0 194.0M355.1 194.3L350.0 194.0L352.1 198.6" stroke="#ffffff"/>
<path d="M378.1 204.8L363.0 191.0M368.4 192.0L363.0 191.0L364.5 196.3" stroke="#ffffff"/>
<path d="M390.7 204.8L378.0 190.0M383.0 191.6L378.0 190.0L378.9 195.2" stroke="#ffffff"/>
<path d="M276.4 192.2L244.5 212.8M249.0 203.6L244.5 212.8L254.7 212.5" stroke="#ffffff"/>
<path d="M289.2 192.2L263.8 203.5M268.0 197.3L263.8 203.5L271.2 204.5" stroke="#ffffff"/>
<path d="M302.0 192.2L283.0 192.2M287.4 189.6L283.0 192.2L287.4 194.9" stroke="#ffffff"/>
<path d="M314.8 192.2L295.8 192.2M300.2 189.6L295.8 192.2L300.2 194.9" stroke="#ffffff"/>
<path d="M327.6 192.2L308.6 192.2M313.0 189.6L308.6 192.2L313.0 194.9" stroke="#ffffff"/>
<path d="M340.3 192.2L318.0 190.0M323.4 187.4L318.0 190.0L322.8 193.6" stroke="#ffffff"/>
<path d="M352.9 192.2L338.0 190.0M341.7 188.4L338.0 190.0L341.1 192.6" stroke="#ffffff"/>
<path d="M365.5 192.2L352.0 189.5M355.5 188.2L352.0 189.5L354.7 192.0" stroke="#ffffff"/>
<path d="M378.1 192.2L366.0 189.0M369.2 188.1L366.0 189.0L368.3 191.4" stroke="#ffffff"/>
<path d="M390.7 192.2L381.0 188.5M383.8 188.0L381.0 188.5L382.7 190.7" stroke="#ffffff"/>
</g>
<g id="legend" shape-rendering="crispEdges">
<rect x="544" y="126" width="10" height="16" fill="#0000ff"/><rect x="544" y="143" width="10" height="16" fill="#0070ff"/><rect x="544" y="160" width="10" height="16" fill="#00a0f0"/><rect x="544" y="177" width="10" height="16" fill="#00c8e0"/><rect x="544" y="194" width="10" height="16" fill="#00d8a0"/><rect x="544" y="211" width="10" height="16" fill="#00e040"/><rect x="544" y="228" width="10" height="16" fill="#00ff00"/><rect x="544" y="246" width="10" height="16" fill="#a8ec00"/><rect x="544" y="263" width="10" height="16" fill="#ffff30"/><rect x="544" y="280" width="10" height="16" fill="#ffe000"/><rect x="544" y="297" width="10" height="16" fill="#ffb000"/><rect x="544" y="314" width="10" height="16" fill="#ff8800"/><rect x="544" y="331" width="10" height="16" fill="#ff6000"/><rect x="544" y="348" width="10" height="16" fill="#ff0000"/>
</g>
<g id="logo">
<circle cx="585.500" cy="32.200" r="14.300" fill="#fff"/>
<circle cx="585.500" cy="32.200" r="13.300" fill="#0000ff"/>
<path d="M588.200 18L591.600 23.200L589.400 26.200L585 25.800A6.500 6.500 0 0 0 585 38.800L589.600 38.600L591.400 40.200L587.400 46.400A14.300 14.300 0 0 0 588.200 18Z" fill="#00ff00"/>
<path d="M587.600 18.300L590.800 23.200L588.900 25.400L584.600 25A7.300 7.300 0 0 0 584.600 39.600L589.300 39.400L590.400 40.400L586.800 46.200" fill="none" stroke="#fff" stroke-width="1.200"/>
<path d="M588.900 18.500L592 23.300L589.900 26.600L585.300 26.400A5.900 5.900 0 0 0 585.300 38.200L589.900 38L592 40L588.300 46" fill="none" stroke="#003000" stroke-width="0.700"/>
</g>
<g id="axis" stroke="#fff" fill="none" shape-rendering="crispEdges"><path d="M588.500 418V433.500H605M587.500 420.500l1-2 1 2M602.500 432.500l2 1-2 1"/></g>
<g id="ref" stroke="#fff" fill="none" shape-rendering="crispEdges"><path d="M172 420.500H215M212 418.500l3 2-3 2"/></g>
<g id="labels">
<text x="562" y="128" fill="#fff" transform="matrix(1 0 0 1.12 0 -15.360)" textLength="32" lengthAdjust="spacingAndGlyphs" xml:space="preserve">0.00</text><text x="562" y="145" fill="#fff" transform="matrix(1 0 0 1.12 0 -17.400)" textLength="32" lengthAdjust="spacingAndGlyphs" xml:space="preserve">0.06</text><text x="562" y="162" fill="#fff" transform="matrix(1 0 0 1.12 0 -19.440)" textLength="32" lengthAdjust="spacingAndGlyphs" xml:space="preserve">0.12</text><text x="562" y="179" fill="#fff" transform="matrix(1 0 0 1.12 0 -21.480)" textLength="32" lengthAdjust="spacingAndGlyphs" xml:space="preserve">0.18</text><text x="562" y="197" fill="#fff" transform="matrix(1 0 0 1.12 0 -23.640)" textLength="32" lengthAdjust="spacingAndGlyphs" xml:space="preserve">0.24</text><text x="562" y="214" fill="#fff" transform="matrix(1 0 0 1.12 0 -25.680)" textLength="32" lengthAdjust="spacingAndGlyphs" xml:space="preserve">0.31</text><text x="562" y="231" fill="#fff" transform="matrix(1 0 0 1.12 0 -27.720)" textLength="32" lengthAdjust="spacingAndGlyphs" xml:space="preserve">0.37</text><text x="562" y="248" fill="#fff" transform="matrix(1 0 0 1.12 0 -29.760)" textLength="32" lengthAdjust="spacingAndGlyphs" xml:space="preserve">0.43</text><text x="562" y="265" fill="#fff" transform="matrix(1 0 0 1.12 0 -31.800)" textLength="32" lengthAdjust="spacingAndGlyphs" xml:space="preserve">0.49</text><text x="562" y="282" fill="#fff" transform="matrix(1 0 0 1.12 0 -33.840)" textLength="32" lengthAdjust="spacingAndGlyphs" xml:space="preserve">0.55</text><text x="562" y="299" fill="#fff" transform="matrix(1 0 0 1.12 0 -35.880)" textLength="32" lengthAdjust="spacingAndGlyphs" xml:space="preserve">0.61</text><text x="562" y="317" fill="#fff" transform="matrix(1 0 0 1.12 0 -38.040)" textLength="32" lengthAdjust="spacingAndGlyphs" xml:space="preserve">0.67</text><text x="562" y="334" fill="#fff" transform="matrix(1 0 0 1.12 0 -40.080)" textLength="32" lengthAdjust="spacingAndGlyphs" xml:space="preserve">0.73</text><text x="562" y="351" fill="#fff" transform="matrix(1 0 0 1.12 0 -42.120)" textLength="32" lengthAdjust="spacingAndGlyphs" xml:space="preserve">0.80</text><text x="562" y="368" fill="#fff" transform="matrix(1 0 0 1.12 0 -44.160)" textLength="32" lengthAdjust="spacingAndGlyphs" xml:space="preserve">0.86</text><text x="562" y="61" fill="#fff" transform="matrix(1 0 0 1.12 0 -7.320)" textLength="48" lengthAdjust="spacingAndGlyphs" xml:space="preserve">PHOTON</text><text x="554" y="111" fill="#fff" transform="matrix(1 0 0 1.12 0 -13.320)" textLength="48" lengthAdjust="spacingAndGlyphs" xml:space="preserve">Vector</text><text x="587" y="409" fill="#fff" transform="matrix(1 0 0 1.12 0 -49.080)" textLength="8" lengthAdjust="spacingAndGlyphs" xml:space="preserve">Y</text><text x="613" y="435" fill="#fff" transform="matrix(1 0 0 1.12 0 -52.200)" textLength="8" lengthAdjust="spacingAndGlyphs" xml:space="preserve">X</text><text x="86" y="421" fill="#fff" transform="matrix(1 0 0 1.12 0 -50.520)" textLength="64" lengthAdjust="spacingAndGlyphs" xml:space="preserve">Dsplcmnt</text><text x="226" y="421" fill="#fff" transform="matrix(1 0 0 1.12 0 -50.520)" textLength="64" lengthAdjust="spacingAndGlyphs" xml:space="preserve">9.16E-01</text><text x="86" y="437" fill="#fff" transform="matrix(1 0 0 1.12 0 -52.440)" textLength="64" lengthAdjust="spacingAndGlyphs" xml:space="preserve">Velocity</text><text x="226" y="437" fill="#fff" transform="matrix(1 0 0 1.12 0 -52.440)" textLength="64" lengthAdjust="spacingAndGlyphs" xml:space="preserve">9.16E-01</text><g clip-path="url(#cl)"><text x="318" y="437" fill="#fff" transform="matrix(1 0 0 1.12 0 -52.440)" textLength="32" lengthAdjust="spacingAndGlyphs" xml:space="preserve">Min:</text><text x="358" y="437" fill="#0000ff" transform="matrix(1 0 0 1.12 0 -52.440)" textLength="64" lengthAdjust="spacingAndGlyphs" xml:space="preserve">1.01E-10</text><text x="433" y="437" fill="#fff" transform="matrix(1 0 0 1.12 0 -52.440)" textLength="32" lengthAdjust="spacingAndGlyphs" xml:space="preserve">Max:</text><text x="471" y="437" fill="#ff0000" transform="matrix(1 0 0 1.12 0 -52.440)" textLength="64" lengthAdjust="spacingAndGlyphs" xml:space="preserve">8.57E-01</text></g><text x="94" y="460" fill="#fff" transform="matrix(1 0 0 1.12 0 -55.200)" textLength="304" lengthAdjust="spacingAndGlyphs" xml:space="preserve">HEXAGON 2D : SFT ANALYSIS  FOR A MODEL</text>
</g>
</svg>
</body></html>
